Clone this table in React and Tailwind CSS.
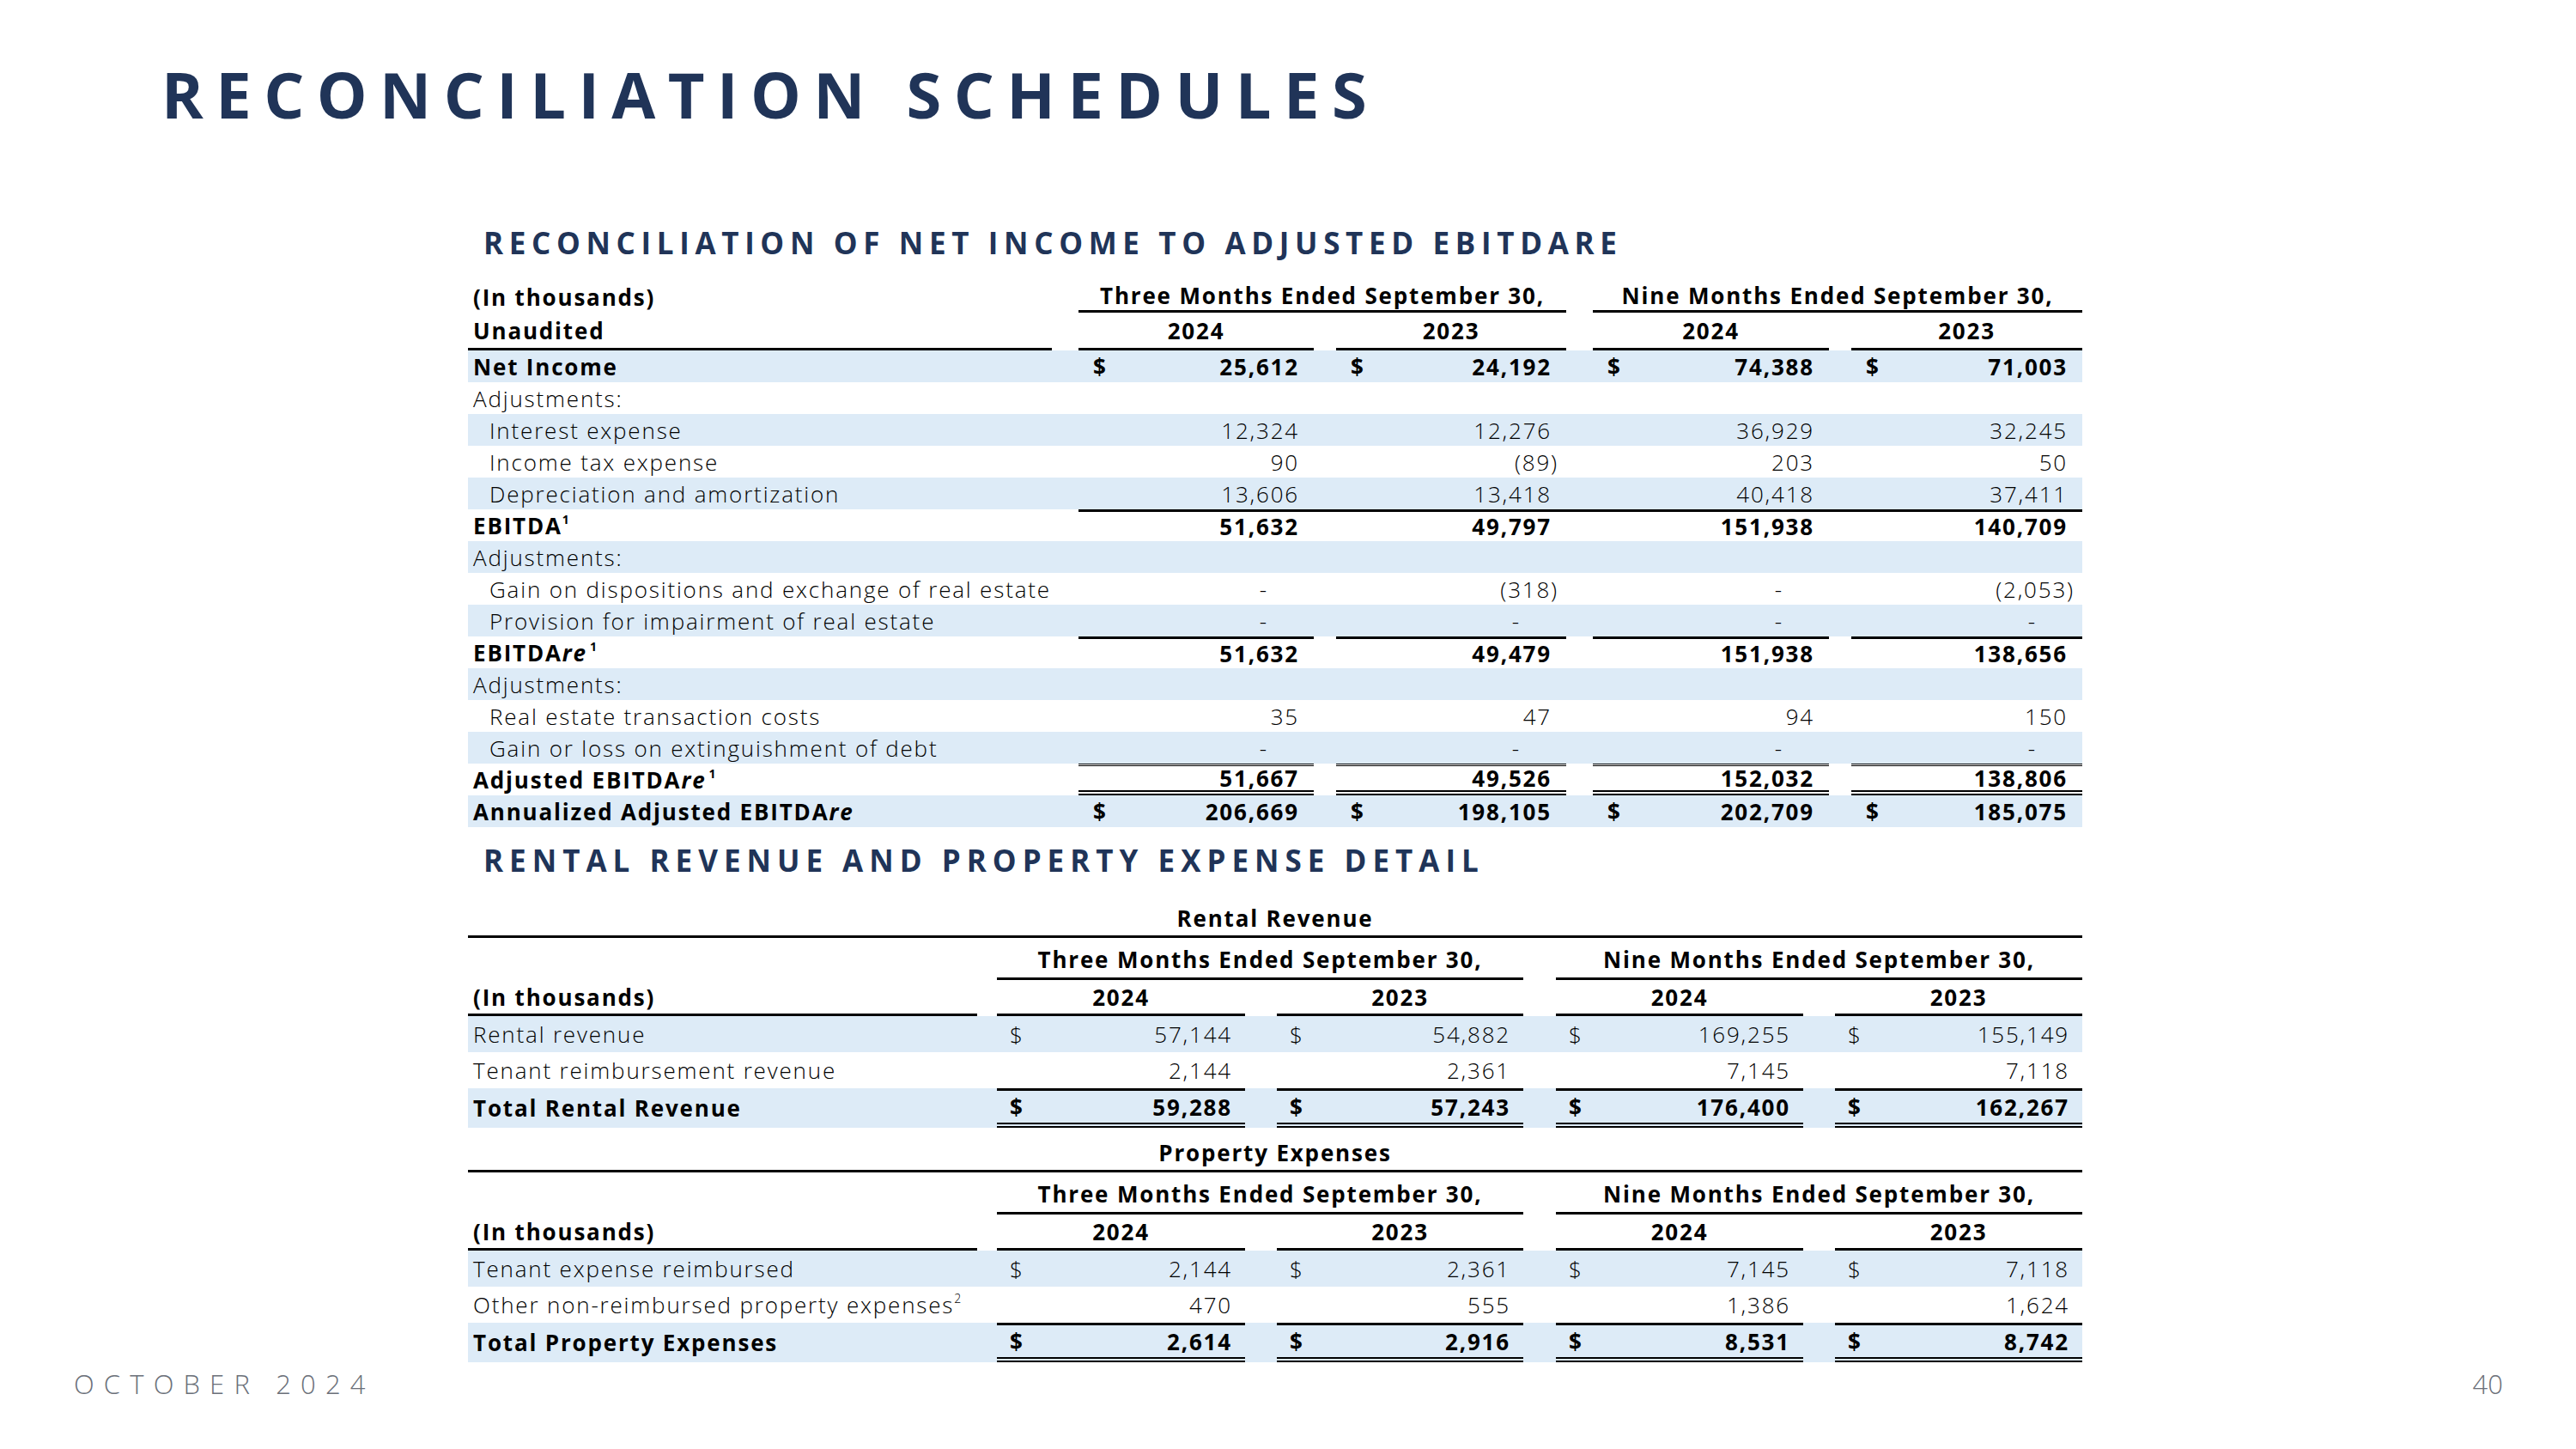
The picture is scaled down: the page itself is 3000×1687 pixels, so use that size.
import React from "react";
import clsx from "clsx";

const SHADE = "bg-[#ddebf7]";

// reconciliation table: label col + 4 value cols, left padding acts as the gap between underlines
const T1_COLS = "grid grid-cols-[680px_305px_294px_306px_295px]";
const T1_PADS = ["pl-[31px]", "pl-[26px]", "pl-[31px]", "pl-[26px]"];

const T2_COLS = "grid grid-cols-[593px_312px_324px_326px_325px]";
const T2_PADS = ["pl-[23px]", "pl-[37px]", "pl-[38px]", "pl-[37px]"];

const Re = () => <i>re</i>;

const reconciliation = [
  { label: "Net Income", bold: true, shade: true, dollar: true, vals: ["25,612", "24,192", "74,388", "71,003"] },
  { label: "Adjustments:" },
  { label: "Interest expense", indent: true, shade: true, vals: ["12,324", "12,276", "36,929", "32,245"] },
  { label: "Income tax expense", indent: true, vals: ["90", "(89)", "203", "50"] },
  { label: "Depreciation and amortization", indent: true, shade: true, vals: ["13,606", "13,418", "40,418", "37,411"] },
  {
    label: (
      <>
        EBITDA<sup className="text-[14px]">1</sup>
      </>
    ),
    bold: true,
    top: "cont",
    vals: ["51,632", "49,797", "151,938", "140,709"],
  },
  { label: "Adjustments:", shade: true },
  { label: "Gain on dispositions and exchange of real estate", indent: true, vals: ["-", "(318)", "-", "(2,053)"] },
  { label: "Provision for impairment of real estate", indent: true, shade: true, vals: ["-", "-", "-", "-"] },
  {
    label: (
      <>
        EBITDA<Re />
        <sup className="text-[14px] ml-[3px]">1</sup>
      </>
    ),
    bold: true,
    top: "gap",
    vals: ["51,632", "49,479", "151,938", "138,656"],
  },
  { label: "Adjustments:", shade: true },
  { label: "Real estate transaction costs", indent: true, vals: ["35", "47", "94", "150"] },
  { label: "Gain or loss on extinguishment of debt", indent: true, shade: true, vals: ["-", "-", "-", "-"] },
  {
    label: (
      <>
        Adjusted EBITDA<Re />
        <sup className="text-[14px] ml-[3px]">1</sup>
      </>
    ),
    bold: true,
    top: "gap",
    double: true,
    vals: ["51,667", "49,526", "152,032", "138,806"],
  },
  {
    label: (
      <>
        Annualized Adjusted EBITDA<Re />
      </>
    ),
    bold: true,
    shade: true,
    dollar: true,
    vals: ["206,669", "198,105", "202,709", "185,075"],
  },
];

const rental = [
  { label: "Rental revenue", shade: true, dollar: true, vals: ["57,144", "54,882", "169,255", "155,149"] },
  { label: "Tenant reimbursement revenue", vals: ["2,144", "2,361", "7,145", "7,118"] },
  { label: "Total Rental Revenue", bold: true, shade: true, dollar: true, total: true, vals: ["59,288", "57,243", "176,400", "162,267"] },
];

const property = [
  { label: "Tenant expense reimbursed", shade: true, dollar: true, vals: ["2,144", "2,361", "7,145", "7,118"] },
  {
    label: (
      <>
        Other non-reimbursed property expenses<sup className="text-[14px]">2</sup>
      </>
    ),
    vals: ["470", "555", "1,386", "1,624"],
  },
  { label: "Total Property Expenses", bold: true, shade: true, dollar: true, total: true, vals: ["2,614", "2,916", "8,531", "8,742"] },
];

function Amount({ value }) {
  if (value === "-") return <span className="mr-[36px]">-</span>;
  if (value.startsWith("(")) return <span className="-mr-[8px]">{value}</span>;
  return <span>{value}</span>;
}

function ValueCell({ value, dollar, outer, inner }) {
  return (
    <div className={clsx("h-full", outer)}>
      <div className={clsx("h-full flex items-center justify-between", inner)}>
        <span>{dollar ? "$" : ""}</span>
        <Amount value={value} />
      </div>
    </div>
  );
}

function ReconRow({ row }) {
  return (
    <div className={clsx(T1_COLS, "h-[37px]", row.shade && SHADE, row.bold ? "font-bold" : "font-light")}>
      <div className={clsx("flex items-center", row.indent ? "pl-[25px]" : "pl-[6px]")}>{row.label}</div>
      {row.vals &&
        row.vals.map((v, i) => (
          <ValueCell
            key={i}
            value={v}
            dollar={row.dollar}
            outer={clsx(T1_PADS[i], row.top === "cont" && i > 0 && "border-t-[3px] border-black")}
            inner={clsx(
              "px-[17px]",
              row.top === "gap" && "border-t-[3px] border-black",
              row.top === "cont" && i === 0 && "border-t-[3px] border-black",
              row.double && "border-b-[6px] border-double border-black"
            )}
          />
        ))}
    </div>
  );
}

function DetailRow({ row }) {
  return (
    <div
      className={clsx(
        T2_COLS,
        row.total ? "h-[46px]" : "h-[42px]",
        row.shade && SHADE,
        row.bold ? "font-bold" : "font-light"
      )}
    >
      <div className="flex items-center pl-[6px]">{row.label}</div>
      {row.vals.map((v, i) => (
        <ValueCell
          key={i}
          value={v}
          dollar={row.dollar}
          outer={T2_PADS[i]}
          inner={clsx(
            "px-[15px]",
            row.total && "border-t-[3px] border-b-[6px] border-black [border-bottom-style:double]"
          )}
        />
      ))}
    </div>
  );
}

function DetailBlock({ title, rows, titleClass }) {
  return (
    <div>
      <div className={clsx("border-b-[3px] border-black flex items-center justify-center font-bold", titleClass)}>
        {title}
      </div>
      <div className={clsx(T2_COLS, "h-[49px] font-bold")}>
        <div />
        <div className="col-span-2 pl-[23px] h-full">
          <div className="h-full pt-[4px] border-b-[3px] border-black flex items-center justify-center">
            Three Months Ended September 30,
          </div>
        </div>
        <div className="col-span-2 pl-[38px] h-full">
          <div className="h-full pt-[4px] border-b-[3px] border-black flex items-center justify-center">
            Nine Months Ended September 30,
          </div>
        </div>
      </div>
      <div className={clsx(T2_COLS, "h-[42px] font-bold")}>
        <div className="h-full border-b-[3px] border-black flex items-center pl-[6px]">(In thousands)</div>
        {["2024", "2023", "2024", "2023"].map((y, i) => (
          <div key={i} className={clsx("h-full", T2_PADS[i])}>
            <div className="h-full border-b-[3px] border-black flex items-center justify-center">{y}</div>
          </div>
        ))}
      </div>
      {rows.map((r, i) => (
        <DetailRow key={i} row={r} />
      ))}
    </div>
  );
}

export default function App() {
  return (
    <div className="w-[3000px] h-[1687px] bg-white flex flex-col font-['Open_Sans',sans-serif] text-black leading-none">
      <h1 className="pt-[73px] pl-[188px] text-[74px] leading-none font-bold tracking-[0.195em] text-[#203458]">
        RECONCILIATION SCHEDULES
      </h1>

      <h2 className="mt-[118px] ml-[563px] text-[35px] leading-none font-bold tracking-[0.19em] text-[#203458]">
        RECONCILIATION OF NET INCOME TO ADJUSTED EBITDARE
      </h2>

      <div className="mt-[27px] ml-[545px] w-[1880px] text-[26px] tracking-[0.07em]">
        <div className={clsx(T1_COLS, "h-[37px] font-bold")}>
          <div className="flex items-center pl-[6px]">(In thousands)</div>
          <div className="col-span-2 pl-[31px] h-full">
            <div className="h-full border-b-[3px] border-black flex items-center justify-center">
              Three Months Ended September 30,
            </div>
          </div>
          <div className="col-span-2 pl-[31px] h-full">
            <div className="h-full border-b-[3px] border-black flex items-center justify-center">
              Nine Months Ended September 30,
            </div>
          </div>
        </div>
        <div className={clsx(T1_COLS, "h-[44px] font-bold")}>
          <div className="h-full border-b-[3px] border-black flex items-center pl-[6px]">Unaudited</div>
          {["2024", "2023", "2024", "2023"].map((y, i) => (
            <div key={i} className={clsx("h-full", T1_PADS[i])}>
              <div className="h-full border-b-[3px] border-black flex items-center justify-center">{y}</div>
            </div>
          ))}
        </div>
        {reconciliation.map((r, i) => (
          <ReconRow key={i} row={r} />
        ))}
      </div>

      <h2 className="mt-[21px] ml-[563px] text-[35px] leading-none font-bold tracking-[0.2em] text-[#203458]">
        RENTAL REVENUE AND PROPERTY EXPENSE DETAIL
      </h2>

      <div className="mt-[27px] ml-[545px] w-[1880px] text-[26px] tracking-[0.07em]">
        <DetailBlock title="Rental Revenue" rows={rental} titleClass="h-[46px] pt-[3px]" />
        <DetailBlock title="Property Expenses" rows={property} titleClass="h-[52px] pt-[9px]" />
      </div>

      <footer className="mt-auto pb-[60px] pl-[86px] pr-[85px] flex justify-between text-[31px] leading-none font-light text-[#6b7079]">
        <span className="tracking-[0.36em]">OCTOBER 2024</span>
        <span>40</span>
      </footer>
    </div>
  );
}
